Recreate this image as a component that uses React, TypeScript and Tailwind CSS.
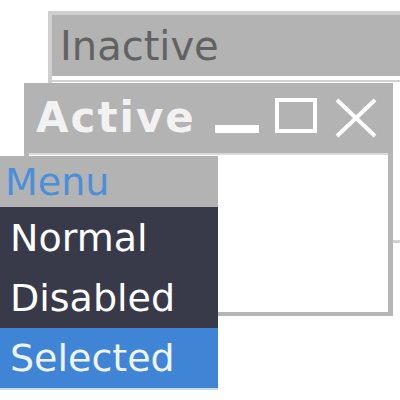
export default function App() {
  return (
    <div
      className="relative w-[400px] h-[400px] overflow-hidden bg-white"
      style={{ fontFamily: '"DejaVu Sans", sans-serif' }}
    >
      {/* inactive window */}
      <div className="absolute left-[48px] top-[11px] w-[380px] border-l-4 border-t-4 border-[#cfcfcf]">
        <div className="h-[61px] bg-[#b3b3b3] pl-[8px] flex items-center">
          <span className="text-[40px] leading-none text-[#626262]">Inactive</span>
        </div>
        <div className="mt-[4px] h-[163px] bg-white border-t-2 border-b-[3px] border-[#d2d2d2]" />
      </div>

      {/* active window */}
      <div className="absolute left-[24px] top-[83px] w-[369px] flex flex-col">
        <div className="h-[70px] bg-[#b3b3b3] flex items-center pl-[12px]">
          <span className="text-[42px] font-bold leading-none tracking-[2px] text-[#f2f2f2]">Active</span>
          <svg className="ml-auto mr-[16px]" width="162" height="40" viewBox="0 0 162 40">
            <rect x="0" y="27" width="44" height="8" fill="#ffffff" />
            <rect x="62" y="2" width="38" height="31" fill="none" stroke="#ffffff" strokeWidth="4" />
            <path d="M122 2 L160 38 M160 2 L122 38" stroke="#ffffff" strokeWidth="4" />
          </svg>
        </div>
        <div className="h-[163px] border-l-[5px] border-r-[5px] border-b-[4px] border-[#b6b6b6] bg-white">
          <div className="h-[2px] bg-[#dadada]" />
        </div>
      </div>

      {/* menu */}
      <div className="absolute left-0 top-[156px] w-[218px] flex flex-col">
        <div className="h-[51px] bg-[#b3b3b3] pl-[5px] flex items-center">
          <span className="text-[38px] leading-none text-[#4a8fdb]">Menu</span>
        </div>
        <div className="bg-[#383a4a]">
          <div className="h-[61px] pl-[10px] flex items-center text-[38px] leading-none text-white">Normal</div>
          <div className="h-[60px] pl-[10px] flex items-center text-[38px] leading-none text-white">Disabled</div>
        </div>
        <div className="h-[60px] bg-[#4084d6] pl-[10px] flex items-center text-[38px] leading-none text-[#eef4fb]">
          Selected
        </div>
        <div className="h-[2px] bg-[#c4daf2]" />
      </div>
    </div>
  );
}
